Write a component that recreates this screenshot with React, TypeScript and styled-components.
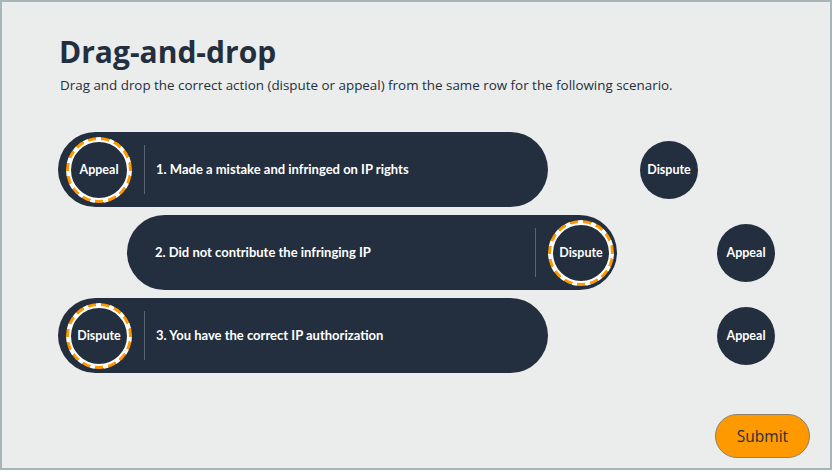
import React from "react";
import styled, { createGlobalStyle } from "styled-components";

const GlobalStyle = createGlobalStyle`
  html, body { margin: 0; padding: 0; background: #ffffff; }
  * { box-sizing: border-box; }
`;

const Frame = styled.div`
  width: 832px;
  height: 470px;
  border: 2px solid #a6b5b5;
  background: #ebedec;
  display: flex;
  flex-direction: column;
  padding: 31px 0 0 0;
  font-family: "Open Sans", "Noto Sans", sans-serif;
  color: #232f3e;
`;

const Header = styled.div`
  padding-left: 57px;
`;

const Title = styled.h1`
  margin: 0;
  font-size: 30px;
  line-height: 38px;
  font-weight: 700;
  color: #232f3e;
`;

const Subtitle = styled.p`
  margin: 5px 0 0 1px;
  font-size: 13.4px;
  line-height: 18px;
  color: #232f3e;
`;

const Rows = styled.div`
  display: flex;
  flex-direction: column;
  gap: 8px;
  margin-top: 38px;
`;

const Row = styled.div<{ $indent: number }>`
  display: flex;
  align-items: center;
  padding-left: ${(p) => p.$indent}px;
`;

const Pill = styled.div<{ $zoneRight?: boolean }>`
  width: 490px;
  height: 75px;
  border-radius: 38px;
  background: #232f3e;
  display: flex;
  align-items: center;
  padding: ${(p) => (p.$zoneRight ? "0 3px 0 28px" : "0 0 0 8px")};
`;

const DropZone = styled.div<{ $gap?: number }>`
  width: 66px;
  height: 66px;
  border-radius: 50%;
  padding: 3px;
  margin-left: ${(p) => p.$gap ?? 0}px;
  background: repeating-conic-gradient(from 4deg, #ff9900 0deg 15deg, #ffffff 15deg 24deg);
  display: flex;
  align-items: center;
  justify-content: center;
  flex-shrink: 0;
`;

const Chip = styled.div<{ $placed?: boolean }>`
  width: ${(p) => (p.$placed ? "60px" : "58px")};
  height: ${(p) => (p.$placed ? "60px" : "58px")};
  border-radius: 50%;
  background: #232f3e;
  border: ${(p) => (p.$placed ? "2px solid #ffffff" : "none")};
  display: flex;
  align-items: center;
  justify-content: center;
  color: #ffffff;
  font-family: "Lato", "Open Sans", sans-serif;
  font-weight: 700;
  font-size: 12.5px;
  flex-shrink: 0;
`;

const Separator = styled.div<{ $gap?: number }>`
  width: 1px;
  height: 49px;
  margin-left: ${(p) => p.$gap ?? 0}px;
  background: #5b6572;
  flex-shrink: 0;
`;

const Statement = styled.div<{ $grow?: boolean }>`
  color: #ffffff;
  font-family: "Lato", "Open Sans", sans-serif;
  font-weight: 700;
  font-size: 13px;
  flex: ${(p) => (p.$grow ? "1" : "0 1 auto")};
  margin-left: ${(p) => (p.$grow ? "0" : "11px")};
  padding-bottom: 2px;
`;

const ChipSlot = styled.div<{ $offset: number }>`
  margin-left: ${(p) => p.$offset}px;
`;

const Footer = styled.div`
  margin-top: auto;
  display: flex;
  justify-content: flex-end;
  padding: 0 20px 10px 0;
`;

const SubmitButton = styled.button`
  width: 95px;
  height: 44px;
  border-radius: 22px;
  background: #ff9900;
  border: 1px solid #8c8170;
  color: #232f3e;
  font-family: "Open Sans", "Noto Sans", sans-serif;
  font-size: 15.5px;
  cursor: pointer;
  padding: 0;
`;

type RowData = {
  text: string;
  placed: string;
  free: string;
  zoneRight: boolean;
  indent: number;
  offset: number;
};

const rows: RowData[] = [
  { text: "1. Made a mistake and infringed on IP rights", placed: "Appeal", free: "Dispute", zoneRight: false, indent: 56, offset: 92 },
  { text: "2. Did not contribute the infringing IP", placed: "Dispute", free: "Appeal", zoneRight: true, indent: 125, offset: 100 },
  { text: "3. You have the correct IP authorization", placed: "Dispute", free: "Appeal", zoneRight: false, indent: 56, offset: 169 },
];

export default function App() {
  return (
    <>
      <GlobalStyle />
      <Frame>
        <Header>
          <Title>Drag-and-drop</Title>
          <Subtitle>
            Drag and drop the correct action (dispute or appeal) from the same row for the following scenario.
          </Subtitle>
        </Header>
        <Rows>
          {rows.map((r) => (
            <Row key={r.text} $indent={r.indent}>
              <Pill $zoneRight={r.zoneRight}>
                {r.zoneRight ? (
                  <>
                    <Statement $grow>{r.text}</Statement>
                    <Separator />
                    <DropZone $gap={12}>
                      <Chip $placed>{r.placed}</Chip>
                    </DropZone>
                  </>
                ) : (
                  <>
                    <DropZone>
                      <Chip $placed>{r.placed}</Chip>
                    </DropZone>
                    <Separator $gap={12} />
                    <Statement>{r.text}</Statement>
                  </>
                )}
              </Pill>
              <ChipSlot $offset={r.offset}>
                <Chip>{r.free}</Chip>
              </ChipSlot>
            </Row>
          ))}
        </Rows>
        <Footer>
          <SubmitButton>Submit</SubmitButton>
        </Footer>
      </Frame>
    </>
  );
}
